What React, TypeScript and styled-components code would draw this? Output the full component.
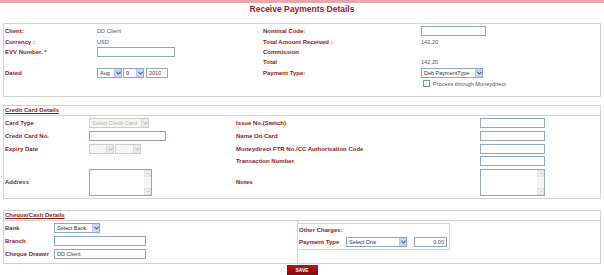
import React from "react";
import styled, { createGlobalStyle } from "styled-components";

const GlobalStyle = createGlobalStyle`
  html, body { margin: 0; padding: 0; background: #fff; }
  body { font-family: "Liberation Sans", Arial, sans-serif; }
  * { box-sizing: border-box; }
`;

const RED = "#8e1b1b";

const Page = styled.div`
  width: 604px;
  height: 275px;
  overflow: hidden;
  background: #fff;
`;

const TopBar = styled.div`
  height: 3px;
  background: #e9a6ae;
`;

const Title = styled.h1`
  margin: 0;
  height: 20px;
  padding-top: 1px;
  text-align: center;
  font-size: 8.5px;
  line-height: 10px;
  font-weight: bold;
  color: #9a1b2a;
`;

const Panel = styled.section<{ $mt?: number }>`
  margin: ${(p) => p.$mt ?? 0}px 3px 0 3px;
  border: 1px solid #d2d2d2;
`;

const PanelHeader = styled.div`
  height: 10px;
  padding-left: 1px;
  border-bottom: 1px solid #d2d2d2;
  font-size: 6px;
  line-height: 9px;
  font-weight: bold;
  color: ${RED};
  text-decoration: underline;
`;

const FormGrid = styled.div<{ $cols: string; $rows: string; $pad: string }>`
  display: grid;
  grid-template-columns: ${(p) => p.$cols};
  grid-template-rows: ${(p) => p.$rows};
  padding: ${(p) => p.$pad};
  align-items: center;
`;

const Label = styled.div<{ $row?: number; $col?: number; $w?: number }>`
  grid-row: ${(p) => p.$row ?? "auto"};
  grid-column: ${(p) => p.$col ?? "auto"};
  width: ${(p) => (p.$w ? `${p.$w}px` : "auto")};
  flex-shrink: 0;
  font-size: 6px;
  font-weight: bold;
  color: ${RED};
  white-space: nowrap;
`;

const Cell = styled.div<{ $row?: number; $col?: number }>`
  grid-row: ${(p) => p.$row ?? "auto"};
  grid-column: ${(p) => p.$col ?? "auto"};
  display: flex;
  align-items: center;
  gap: 1px;
  font-size: 5.6px;
  color: #555;
  white-space: nowrap;
`;

const TextBox = styled.div<{ $w: number; $h?: number; $align?: string; $ml?: number }>`
  width: ${(p) => p.$w}px;
  height: ${(p) => p.$h ?? 10}px;
  margin-left: ${(p) => p.$ml ?? 0}px;
  border: 1px solid #8fa7c3;
  background: #fff;
  font-size: 5.5px;
  line-height: 8px;
  padding: 0 2px;
  color: #444;
  text-align: ${(p) => p.$align ?? "left"};
`;

const SelectBox = styled.div<{ $w: number; $disabled?: boolean }>`
  width: ${(p) => p.$w}px;
  height: 10px;
  border: 1px solid ${(p) => (p.$disabled ? "#cfcdc4" : "#8fa7c3")};
  background: ${(p) => (p.$disabled ? "#f5f5f2" : "#fff")};
  color: ${(p) => (p.$disabled ? "#b3b3b3" : "#333")};
  display: flex;
  align-items: stretch;
  font-size: 5.5px;
`;

const SelectText = styled.span`
  flex: 1;
  padding-left: 2px;
  line-height: 8px;
  overflow: hidden;
  white-space: nowrap;
`;

const SelectArrow = styled.span<{ $disabled?: boolean }>`
  width: 7px;
  background: ${(p) => (p.$disabled ? "#e9e9e6" : "#c7d7fb")};
  border-left: 1px solid ${(p) => (p.$disabled ? "#dcdcd8" : "#b4c8f2")};
  display: flex;
  align-items: center;
  justify-content: center;
`;

const Select: React.FC<{ w: number; text?: string; disabled?: boolean }> = ({ w, text = "", disabled }) => (
  <SelectBox $w={w} $disabled={disabled}>
    <SelectText>{text}</SelectText>
    <SelectArrow $disabled={disabled}>
      <svg width="5" height="4" viewBox="0 0 5 4">
        <path d="M0.5 0.8 L2.5 3 L4.5 0.8" fill="none" stroke={disabled ? "#bdbdbd" : "#4d6185"} strokeWidth="1.1" />
      </svg>
    </SelectArrow>
  </SelectBox>
);

const AreaBox = styled.div<{ $w: number }>`
  width: ${(p) => p.$w}px;
  height: 27px;
  border: 1px solid #8fa7c3;
  background: #fff;
  display: flex;
  justify-content: flex-end;
`;

const ScrollTrack = styled.div`
  width: 7px;
  background: #f4f4f4;
  display: flex;
  flex-direction: column;
  justify-content: space-between;
`;

const ScrollBtn = styled.div`
  height: 7px;
  background: #f0f0ee;
  border: 1px solid #e0e0dc;
  display: flex;
  align-items: center;
  justify-content: center;
`;

const TextArea: React.FC<{ w: number }> = ({ w }) => (
  <AreaBox $w={w}>
    <ScrollTrack>
      <ScrollBtn>
        <svg width="4" height="3" viewBox="0 0 4 3">
          <path d="M0.5 2.5 L2 0.8 L3.5 2.5" fill="none" stroke="#c4c4c4" strokeWidth="0.9" />
        </svg>
      </ScrollBtn>
      <ScrollBtn>
        <svg width="4" height="3" viewBox="0 0 4 3">
          <path d="M0.5 0.5 L2 2.2 L3.5 0.5" fill="none" stroke="#c4c4c4" strokeWidth="0.9" />
        </svg>
      </ScrollBtn>
    </ScrollTrack>
  </AreaBox>
);

const CheckBox = styled.span`
  width: 7px;
  height: 7px;
  border: 1px solid #7b8fae;
  background: #fff;
  margin-left: 2px;
  margin-right: 2px;
`;

const CashBody = styled.div`
  display: flex;
`;

const CashLeft = styled.div`
  width: 293px;
`;

const CashRight = styled.div`
  flex: 1;
  border-left: 1px solid #d2d2d2;
  padding-top: 2px;
  padding-bottom: 13px;
`;

const OtherBox = styled.div`
  width: 152px;
  border: 1px solid #d2d2d2;
  border-left: none;
  padding: 1px 0 1px 1px;
`;

const OtherRow = styled.div<{ $h: number }>`
  height: ${(p) => p.$h}px;
  display: flex;
  align-items: center;
`;

const Footer = styled.div`
  display: flex;
  justify-content: center;
  padding-top: 1px;
`;

const SaveButton = styled.button`
  width: 31px;
  height: 11px;
  padding: 0;
  border: none;
  background: linear-gradient(#b4141c, #7d0a0e);
  color: #fff;
  font-family: "Liberation Sans", Arial, sans-serif;
  font-size: 5px;
  font-weight: bold;
  line-height: 11px;
`;

export default function App() {
  return (
    <Page>
      <GlobalStyle />
      <TopBar />
      <Title>Receive Payments Details</Title>

      <Panel>
        <FormGrid $cols="92px 166px 158px 1fr" $rows="10px 11px 10px 10px 11px 11px" $pad="2px 0 7px 1px">
          <Label $row={1} $col={1}>Client:</Label>
          <Cell $row={1} $col={2}>DD Client</Cell>
          <Label $row={1} $col={3}>Nominal Code:</Label>
          <Cell $row={1} $col={4}><TextBox $w={65} /></Cell>

          <Label $row={2} $col={1}>Currency :</Label>
          <Cell $row={2} $col={2}>USD</Cell>
          <Label $row={2} $col={3}>Total Amount Received :</Label>
          <Cell $row={2} $col={4}>142.20</Cell>

          <Label $row={3} $col={1}>EVV Number. *</Label>
          <Cell $row={3} $col={2}><TextBox $w={78} /></Cell>
          <Label $row={3} $col={3}>Commission</Label>

          <Label $row={4} $col={3}>Total</Label>
          <Cell $row={4} $col={4}>142.20</Cell>

          <Label $row={5} $col={1}>Dated</Label>
          <Cell $row={5} $col={2}>
            <Select w={25} text="Aug" />
            <Select w={21} text="9" />
            <TextBox $w={22} $ml={1}>2010</TextBox>
          </Cell>
          <Label $row={5} $col={3}>Payment Type:</Label>
          <Cell $row={5} $col={4}><Select w={62} text="Deb PaymentType" /></Cell>

          <Cell $row={6} $col={4}><CheckBox />Process through Moneydirect</Cell>
        </FormGrid>
      </Panel>

      <Panel $mt={8}>
        <PanelHeader>Credit Card Details</PanelHeader>
        <FormGrid $cols="84px 147px 244px 1fr" $rows="13px 13px 13px 12px 30px" $pad="0 0 1px 1px">
          <Label $row={1} $col={1}>Card Type</Label>
          <Cell $row={1} $col={2}><Select w={60} text="Select Credit Card" disabled /></Cell>
          <Label $row={1} $col={3}>Issue No.(Switch)</Label>
          <Cell $row={1} $col={4}><TextBox $w={65} /></Cell>

          <Label $row={2} $col={1}>Credit Card No.</Label>
          <Cell $row={2} $col={2}><TextBox $w={77} /></Cell>
          <Label $row={2} $col={3}>Name On Card</Label>
          <Cell $row={2} $col={4}><TextBox $w={65} /></Cell>

          <Label $row={3} $col={1}>Expiry Date</Label>
          <Cell $row={3} $col={2}>
            <Select w={25} disabled />
            <Select w={26} disabled />
          </Cell>
          <Label $row={3} $col={3}>Moneydirect FTR No./CC Authorisation Code</Label>
          <Cell $row={3} $col={4}><TextBox $w={65} /></Cell>

          <Label $row={4} $col={3}>Transaction Number</Label>
          <Cell $row={4} $col={4}><TextBox $w={65} /></Cell>

          <Label $row={5} $col={1}>Address</Label>
          <Cell $row={5} $col={2}><TextArea w={63} /></Cell>
          <Label $row={5} $col={3}>Notes</Label>
          <Cell $row={5} $col={4}><TextArea w={65} /></Cell>
        </FormGrid>
      </Panel>

      <Panel $mt={11}>
        <PanelHeader>Cheque/Cash Details</PanelHeader>
        <CashBody>
          <CashLeft>
            <FormGrid $cols="49px 1fr" $rows="13px 13px 13px" $pad="0 0 2px 1px">
              <Label $row={1} $col={1}>Bank</Label>
              <Cell $row={1} $col={2}><Select w={46} text="Select Bank" /></Cell>
              <Label $row={2} $col={1}>Branch</Label>
              <Cell $row={2} $col={2}><TextBox $w={92} /></Cell>
              <Label $row={3} $col={1}>Cheque Drawer</Label>
              <Cell $row={3} $col={2}><TextBox $w={92}>DD Client</TextBox></Cell>
            </FormGrid>
          </CashLeft>
          <CashRight>
            <OtherBox>
              <OtherRow $h={10}><Label>Other Charges:</Label></OtherRow>
              <OtherRow $h={13}>
                <Label $w={47}>Payment Type</Label>
                <Cell>
                  <Select w={61} text="Select One" />
                  <TextBox $w={33} $ml={6} $align="right">0.00</TextBox>
                </Cell>
              </OtherRow>
            </OtherBox>
          </CashRight>
        </CashBody>
      </Panel>

      <Footer>
        <SaveButton>SAVE</SaveButton>
      </Footer>
    </Page>
  );
}
